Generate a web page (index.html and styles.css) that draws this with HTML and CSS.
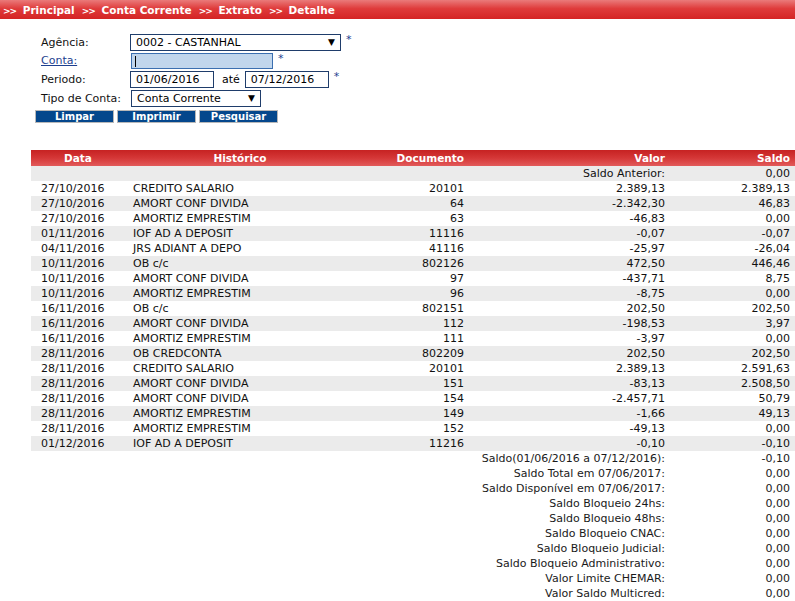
FILE: index.html
```html
<!DOCTYPE html>
<html lang="pt-BR">
<head>
<meta charset="utf-8">
<title>Extrato - Detalhe</title>
<link rel="stylesheet" href="styles.css">
</head>
<body>
<div class="topbar">
  <span class="crumb"><span class="arr">&gt;&gt;</span> Principal</span>
  <span class="crumb"><span class="arr">&gt;&gt;</span> Conta Corrente</span>
  <span class="crumb"><span class="arr">&gt;&gt;</span> Extrato</span>
  <span class="crumb"><span class="arr">&gt;&gt;</span> Detalhe</span>
</div>

<form class="filtro">
  <div class="frow">
    <label class="lbl">Agência:</label>
    <div class="sel sel-ag">0002 - CASTANHAL<span class="tri">▼</span></div>
    <span class="req">*</span>
  </div>
  <div class="frow">
    <a class="lbl link" href="#">Conta:</a>
    <div class="inp inp-conta"><span class="caret"></span></div>
    <span class="req">*</span>
  </div>
  <div class="frow">
    <label class="lbl">Periodo:</label>
    <div class="inp inp-data">01/06/2016</div>
    <span class="ate">até</span>
    <div class="inp inp-data">07/12/2016</div>
    <span class="req">*</span>
  </div>
  <div class="frow frow-tipo">
    <label class="lbl">Tipo de Conta:</label>
    <div class="sel sel-tipo">Conta Corrente<span class="tri">▼</span></div>
  </div>
  <div class="btns">
    <button type="button" class="btn">Limpar</button>
    <button type="button" class="btn">Imprimir</button>
    <button type="button" class="btn">Pesquisar</button>
  </div>
</form>

<table class="extrato">
  <colgroup>
    <col class="c-data"><col class="c-hist"><col class="c-doc"><col class="c-val"><col class="c-saldo">
  </colgroup>
  <thead>
    <tr><th class="ctr">Data</th><th class="ctr">Histórico</th><th class="r">Documento</th><th class="r">Valor</th><th class="r last">Saldo</th></tr>
  </thead>
  <tbody>
    <tr class="g"><td></td><td></td><td></td><td class="r">Saldo Anterior:</td><td class="r last">0,00</td></tr>
    <tr><td>27/10/2016</td><td>CREDITO SALARIO</td><td class="r">20101</td><td class="r">2.389,13</td><td class="r last">2.389,13</td></tr>
    <tr class="g"><td>27/10/2016</td><td>AMORT CONF DIVIDA</td><td class="r">64</td><td class="r">-2.342,30</td><td class="r last">46,83</td></tr>
    <tr><td>27/10/2016</td><td>AMORTIZ EMPRESTIM</td><td class="r">63</td><td class="r">-46,83</td><td class="r last">0,00</td></tr>
    <tr class="g"><td>01/11/2016</td><td>IOF AD A DEPOSIT</td><td class="r">11116</td><td class="r">-0,07</td><td class="r last">-0,07</td></tr>
    <tr><td>04/11/2016</td><td>JRS ADIANT A DEPO</td><td class="r">41116</td><td class="r">-25,97</td><td class="r last">-26,04</td></tr>
    <tr class="g"><td>10/11/2016</td><td>OB c/c</td><td class="r">802126</td><td class="r">472,50</td><td class="r last">446,46</td></tr>
    <tr><td>10/11/2016</td><td>AMORT CONF DIVIDA</td><td class="r">97</td><td class="r">-437,71</td><td class="r last">8,75</td></tr>
    <tr class="g"><td>10/11/2016</td><td>AMORTIZ EMPRESTIM</td><td class="r">96</td><td class="r">-8,75</td><td class="r last">0,00</td></tr>
    <tr><td>16/11/2016</td><td>OB c/c</td><td class="r">802151</td><td class="r">202,50</td><td class="r last">202,50</td></tr>
    <tr class="g"><td>16/11/2016</td><td>AMORT CONF DIVIDA</td><td class="r">112</td><td class="r">-198,53</td><td class="r last">3,97</td></tr>
    <tr><td>16/11/2016</td><td>AMORTIZ EMPRESTIM</td><td class="r">111</td><td class="r">-3,97</td><td class="r last">0,00</td></tr>
    <tr class="g"><td>28/11/2016</td><td>OB CREDCONTA</td><td class="r">802209</td><td class="r">202,50</td><td class="r last">202,50</td></tr>
    <tr><td>28/11/2016</td><td>CREDITO SALARIO</td><td class="r">20101</td><td class="r">2.389,13</td><td class="r last">2.591,63</td></tr>
    <tr class="g"><td>28/11/2016</td><td>AMORT CONF DIVIDA</td><td class="r">151</td><td class="r">-83,13</td><td class="r last">2.508,50</td></tr>
    <tr><td>28/11/2016</td><td>AMORT CONF DIVIDA</td><td class="r">154</td><td class="r">-2.457,71</td><td class="r last">50,79</td></tr>
    <tr class="g"><td>28/11/2016</td><td>AMORTIZ EMPRESTIM</td><td class="r">149</td><td class="r">-1,66</td><td class="r last">49,13</td></tr>
    <tr><td>28/11/2016</td><td>AMORTIZ EMPRESTIM</td><td class="r">152</td><td class="r">-49,13</td><td class="r last">0,00</td></tr>
    <tr class="g"><td>01/12/2016</td><td>IOF AD A DEPOSIT</td><td class="r">11216</td><td class="r">-0,10</td><td class="r last">-0,10</td></tr>
  </tbody>
  <tbody class="resumo">
    <tr><td colspan="4" class="r">Saldo(01/06/2016 a 07/12/2016):</td><td class="r last">-0,10</td></tr>
    <tr><td colspan="4" class="r">Saldo Total em 07/06/2017:</td><td class="r last">0,00</td></tr>
    <tr><td colspan="4" class="r">Saldo Disponível em 07/06/2017:</td><td class="r last">0,00</td></tr>
    <tr><td colspan="4" class="r">Saldo Bloqueio 24hs:</td><td class="r last">0,00</td></tr>
    <tr><td colspan="4" class="r">Saldo Bloqueio 48hs:</td><td class="r last">0,00</td></tr>
    <tr><td colspan="4" class="r">Saldo Bloqueio CNAC:</td><td class="r last">0,00</td></tr>
    <tr><td colspan="4" class="r">Saldo Bloqueio Judicial:</td><td class="r last">0,00</td></tr>
    <tr><td colspan="4" class="r">Saldo Bloqueio Administrativo:</td><td class="r last">0,00</td></tr>
    <tr><td colspan="4" class="r">Valor Limite CHEMAR:</td><td class="r last">0,00</td></tr>
    <tr><td colspan="4" class="r">Valor Saldo Multicred:</td><td class="r last">0,00</td></tr>
  </tbody>
</table>
</body>
</html>
```

FILE: styles.css
```css
html, body {
  margin: 0;
  padding: 0;
  background: #fff;
}
body {
  font-family: "DejaVu Sans", Verdana, sans-serif;
  font-size: 11px;
  color: #000;
  width: 795px;
  overflow: hidden;
}

.topbar {
  height: 19px;
  background: linear-gradient(to bottom, #ea7a7a 0%, #df3b3b 45%, #d42424 100%);
  display: flex;
  align-items: center;
  padding-left: 3px;
  gap: 7px;
  color: #fff;
  font-weight: bold;
  font-size: 10.5px;
  white-space: nowrap;
}
.topbar .arr {
  font-size: 9px;
  letter-spacing: -1px;
  margin-right: 3px;
}

.filtro {
  margin: 14px 0 0 0;
  padding-left: 41px;
}
.frow {
  display: flex;
  align-items: center;
  height: 18.5px;
}
.frow-tipo {
  padding-top: 1px;
}
.lbl {
  width: 89px;
  flex: none;
  color: #111;
}
.link {
  color: #1d3f8f;
  text-decoration: underline;
}
.sel, .inp {
  box-sizing: border-box;
  height: 17px;
  border: 1px solid #1f3d6b;
  background: #fff;
  padding: 0 5px;
  line-height: 15px;
  font-size: 11px;
  position: relative;
  color: #000;
}
.sel-ag { width: 211px; }
.sel-tipo { width: 130px; margin-left: 1px; height: 17px; }
.tri {
  position: absolute;
  right: 5px;
  top: 0;
  font-size: 9px;
  line-height: 15px;
}
.inp-conta {
  width: 142px;
  margin-left: 1px;
  background: #c1d6ec;
  border-color: #3b6fb0;
  height: 16px;
}
.caret {
  display: block;
  width: 1px;
  height: 11px;
  margin-top: 2px;
  margin-left: -2px;
  background: #000;
}
.inp-data { width: 84px; }
.ate {
  margin: 0 5px 0 8px;
}
.req {
  color: #1d3f8f;
  margin-left: 5px;
  align-self: flex-start;
  line-height: 14px;
}

.btns {
  display: flex;
  gap: 3px;
  margin: 2px 0 0 -6px;
}
.btn {
  box-sizing: border-box;
  width: 79px;
  height: 13px;
  padding: 0;
  border: 1px solid #b8b8b8;
  background: #04478c;
  color: #fff;
  font-family: "DejaVu Sans", Verdana, sans-serif;
  font-weight: bold;
  font-size: 10px;
  line-height: 11px;
  text-align: center;
}

.extrato {
  margin: 27px 0 0 31px;
  width: 764px;
  border-collapse: collapse;
  table-layout: fixed;
}
.c-data { width: 94px; }
.c-hist { width: 230px; }
.c-doc { width: 112px; }
.c-val { width: 201px; }
.c-saldo { width: 127px; }

.extrato th {
  height: 16px;
  padding: 0 3px;
  font-size: 10.5px;
  font-weight: bold;
  color: #fff;
  line-height: 15px;
  background: linear-gradient(to bottom, #c62222 0%, #d53737 50%, #e25a5a 100%);
  white-space: nowrap;
}
.extrato td {
  height: 15px;
  padding: 0 3px 0 10px;
  line-height: 15px;
  white-space: nowrap;
  color: #111;
}
.extrato td:nth-child(2) { padding-left: 8px; }
.extrato .r { text-align: right; padding-left: 0; padding-right: 3px; }
.extrato .ctr { text-align: center; }
.extrato .last { padding-right: 5px; }
.extrato tr.g td { background: #ebebeb; }
.resumo td { color: #1a1a1a; }
```
